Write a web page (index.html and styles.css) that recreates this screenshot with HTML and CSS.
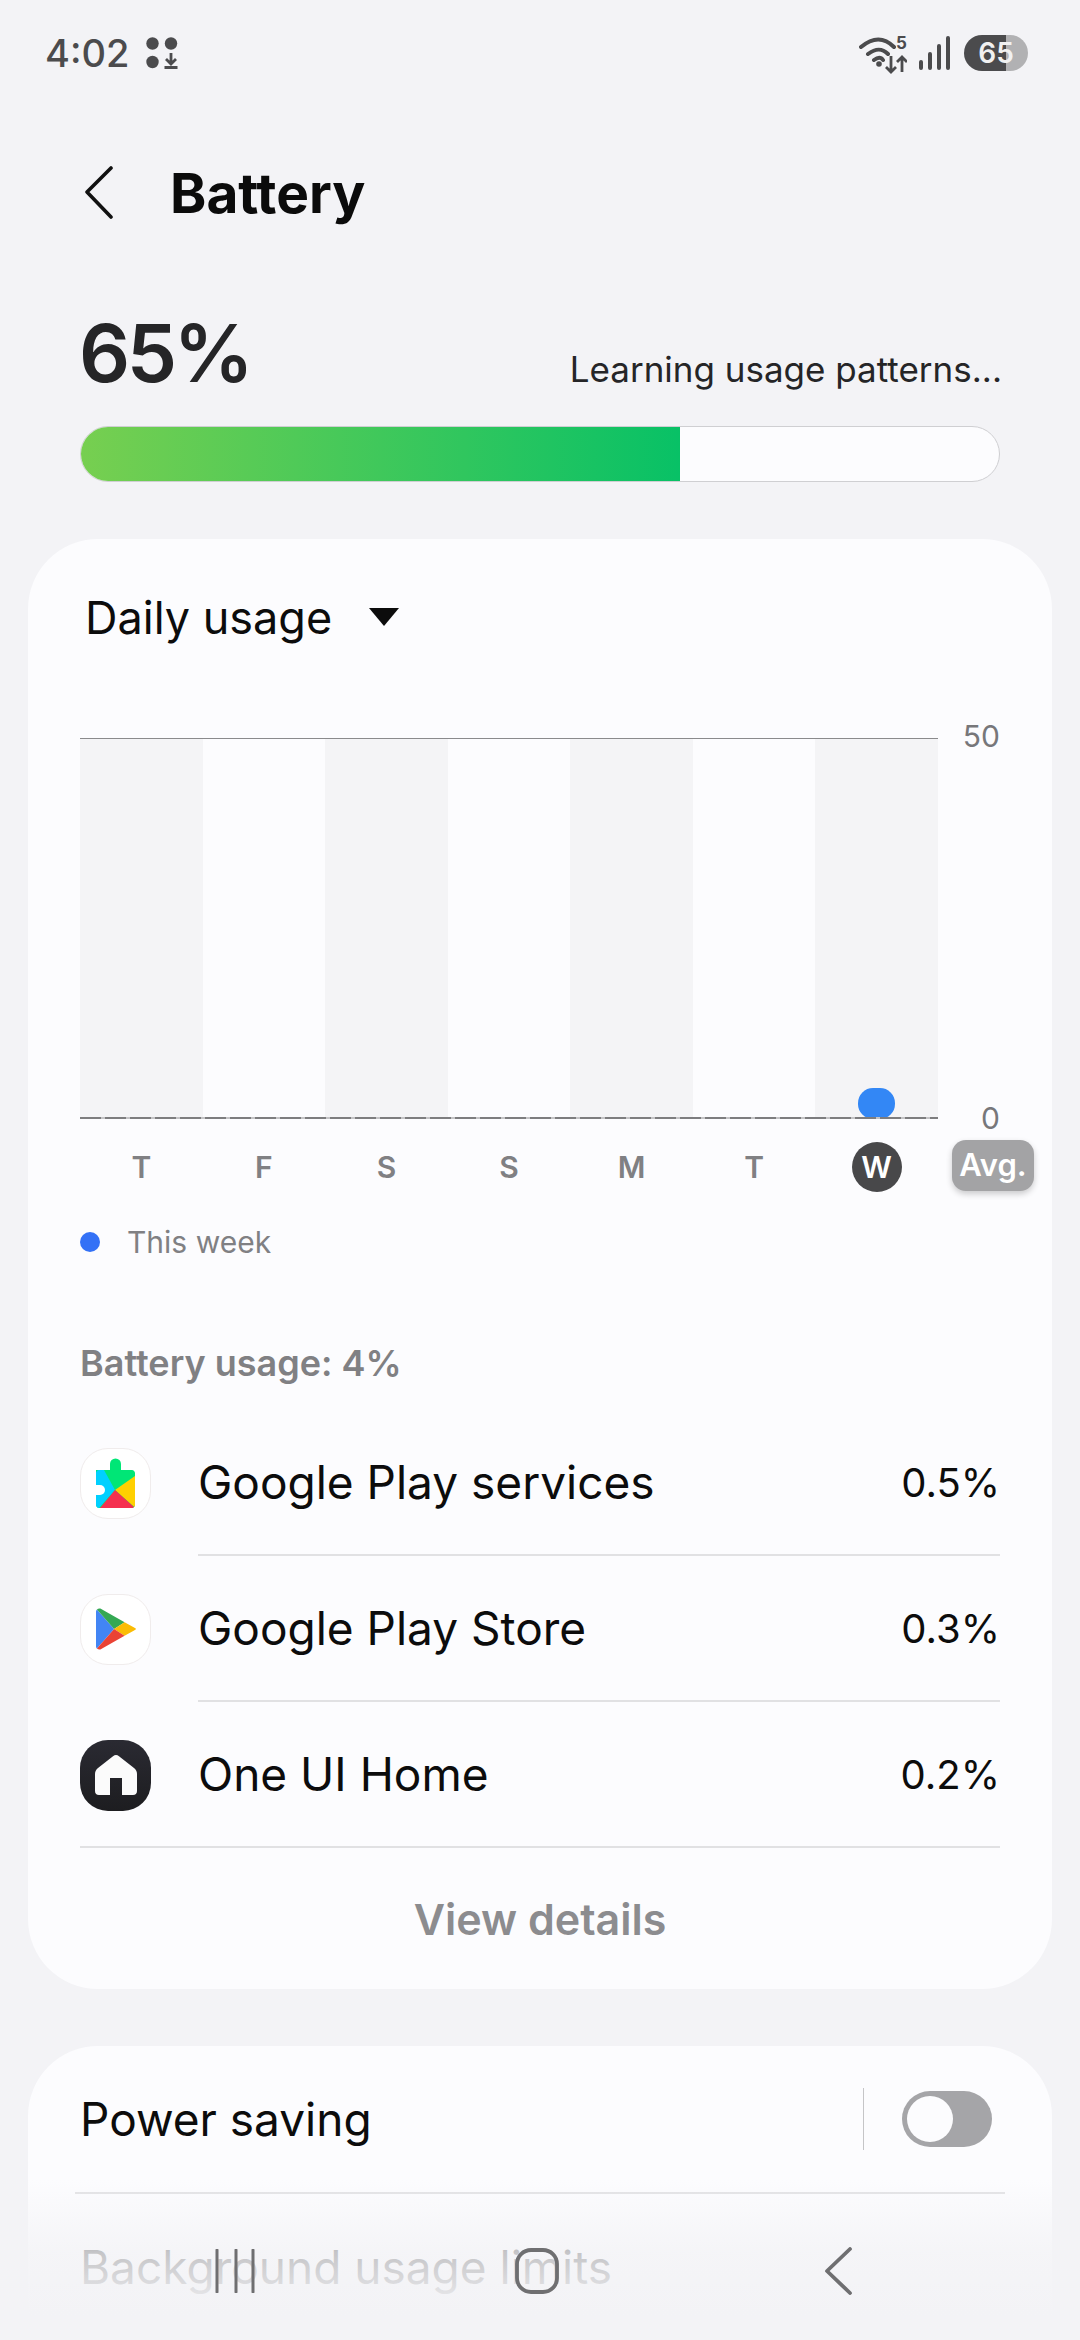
FILE: index.html
```html
<!DOCTYPE html>
<html>

<head>
    <title>Battery</title>
    <link rel="stylesheet" href="styles.css">
</head>

<body>
    <div class="phone">
        <div class="status-bar">
            <div class="status-left">
                <span class="clock">4:02</span>
                <svg class="notif-icon" width="32" height="32" viewBox="0 0 32 32">
                    <circle cx="6.5" cy="6.5" r="6.2" fill="#4b4b4d" />
                    <circle cx="25" cy="6.5" r="6.2" fill="#4b4b4d" />
                    <circle cx="6.5" cy="25" r="6.2" fill="#4b4b4d" />
                    <path d="M25 16v11M20 22l5 5 5-5M18.500 30.500h13" fill="none" stroke="#4b4b4d" stroke-width="2.800" />
                </svg>
            </div>
            <div class="status-right">
                <svg class="wifi" width="48" height="42" viewBox="0 -4 48 42">
                    <path d="M2 11C14 1 25 1 35 11M9 18c8-6 14-6 20 0M15 24c4-3 7-3 9 0" fill="none" stroke="#4b4b4d" stroke-width="4" stroke-linecap="round" />
                    <circle cx="20" cy="28" r="2.800" fill="#4b4b4d" />
                    <path d="M32 20v16M27 31l5 5 5-5M43 36V21M38 26l5-5 5 5" fill="none" stroke="#4b4b4d" stroke-width="2.800" />
                    <text x="37" y="13" class="wifi-five">5</text>
                </svg>
                <svg class="signal" width="32" height="34" viewBox="0 0 32 34">
                    <path d="M3 26v6M12 18v14M21 10v22M30 2v30" fill="none" stroke="#4b4b4d" stroke-width="4" stroke-linecap="round" />
                </svg>
                <div class="battery-pill"><span>65</span></div>
            </div>
        </div>

        <div class="title-bar">
            <svg width="30" height="54" viewBox="0 0 30 54">
                <path d="M27 2 3 26l24 25" fill="none" stroke="#111" stroke-width="3.600" stroke-linecap="round" stroke-linejoin="round" />
            </svg>
            <h1>Battery</h1>
        </div>

        <div class="level-row">
            <span class="level">65%</span>
            <span class="level-note">Learning usage patterns...</span>
        </div>
        <div class="level-bar">
            <div class="level-fill" style="width: 65.200%"></div>
        </div>

        <section class="card usage-card">
            <div class="dropdown">
                <span>Daily usage</span>
                <span class="dropdown-arrow"></span>
            </div>

            <div class="chart">
                <div class="chart-plot">
                    <div class="chart-col shaded"></div>
                    <div class="chart-col"></div>
                    <div class="chart-col shaded"></div>
                    <div class="chart-col"></div>
                    <div class="chart-col shaded"></div>
                    <div class="chart-col"></div>
                    <div class="chart-col shaded"><div class="chart-bar"></div></div>
                </div>
                <span class="axis-label axis-top">50</span>
                <span class="axis-label axis-bottom">0</span>
            </div>

            <div class="days">
                <span class="day">T</span>
                <span class="day">F</span>
                <span class="day">S</span>
                <span class="day">S</span>
                <span class="day">M</span>
                <span class="day">T</span>
                <span class="day"><b class="today">W</b></span>
                <span class="avg-badge">Avg.</span>
            </div>

            <div class="legend">
                <span class="legend-dot"></span>
                <span>This week</span>
            </div>

            <h2 class="usage-total">Battery usage: 4%</h2>

            <div class="app-row">
                <div class="app-icon">
                    <svg width="39" height="50" viewBox="0 0 39 50">
                        <path d="M14 12V6a5.500 5.500 0 1 1 11 0v6h11c1.500 0 3 1.500 3 3v32c0 1.500-1.500 3-3 3H3c-1.500 0-3-1.500-3-3V12z" fill="#00e676" />
                        <path d="M0 15c0-1.500 1.500-3 3-3h5l11 20L3 50c-1.500 0-3-1.500-3-3z" fill="#00d0ff" />
                        <path d="M39 18v29c0 .8-.3 1.500-.8 2L19 32z" fill="#ffd000" />
                        <path d="M19 32 38 49c-.5.7-1.200 1-2 1H4z" fill="#f5304f" />
                        <path d="M0 27h4a5 5 0 0 1 0 10H0z" fill="#fff" />
                    </svg>
                </div>
                <div class="app-info">
                    <span class="app-name">Google Play services</span>
                    <span class="app-pct">0.5%</span>
                </div>
            </div>
            <div class="app-row">
                <div class="app-icon">
                    <svg width="40" height="44" viewBox="0 0 42 46">
                        <path d="M1 2.500 19 23 1 43.500C.4 43 0 42 0 41V5c0-1 .4-2 1-2.500z" fill="#4285f4" />
                        <path d="M1 2.500C2 1.500 4 1 5.500 2L30 16l-11 7z" fill="#34a853" />
                        <path d="M30 16l10 5.500c2.500 1.300 2.500 1.700 0 3L30 30l-11-7z" fill="#fbbc04" />
                        <path d="M19 23l11 7L5.500 44c-1.500 1-3.500.5-4.500-.5z" fill="#ea4335" />
                    </svg>
                </div>
                <div class="app-info">
                    <span class="app-name">Google Play Store</span>
                    <span class="app-pct">0.3%</span>
                </div>
            </div>
            <div class="app-row">
                <div class="app-icon dark">
                    <svg width="42" height="40" viewBox="0 0 42 40">
                        <path d="M21 0c1 0 2 .4 3 1.200L39 13c2 1.500 3 3.500 3 6v17c0 2.500-1.500 4-4 4H27V23H15v17H4c-2.500 0-4-1.500-4-4V19c0-2.500 1-4.500 3-6L18 1.200C19 .4 20 0 21 0z" fill="#fbfbfb" />
                    </svg>
                </div>
                <div class="app-info last">
                    <span class="app-name">One UI Home</span>
                    <span class="app-pct">0.2%</span>
                </div>
            </div>
            <div class="view-details">View details</div>
        </section>

        <section class="card settings-card">
            <div class="setting-row">
                <span>Power saving</span>
                <div class="setting-control">
                    <span class="vline"></span>
                    <span class="toggle"><span class="toggle-knob"></span></span>
                </div>
            </div>
            <div class="setting-divider"></div>
            <div class="setting-row">
                <span>Background usage limits</span>
            </div>
        </section>

        <div class="bottom-fade"></div>
        <div class="nav-bar">
            <svg width="44" height="44" viewBox="0 0 44 44">
                <path d="M3 1v42M22 1v42M39 1v42" fill="none" stroke="#6f6f71" stroke-width="3" stroke-linecap="round" />
            </svg>
            <svg width="44" height="46" viewBox="0 0 44 46">
                <rect x="2" y="2" width="40" height="42" rx="14" fill="none" stroke="#6f6f71" stroke-width="3.800" />
            </svg>
            <svg class="nav-back" width="30" height="48" viewBox="0 0 30 48">
                <path d="M27 2 4 24l23 22" fill="none" stroke="#6f6f71" stroke-width="3.800" stroke-linecap="round" stroke-linejoin="round" />
            </svg>
        </div>
    </div>
</body>

</html>
```

FILE: styles.css
```css
* {
    box-sizing: border-box;
}

body {
    margin: 0;
    padding: 0;
    background-color: #f3f3f6;
    font-family: Inter, "Noto Sans", sans-serif;
}

.phone {
    position: relative;
    width: 1080px;
    height: 2340px;
    overflow: hidden;
    background-color: #f3f3f6;
}

.status-bar {
    display: flex;
    justify-content: space-between;
    align-items: center;
    height: 106px;
    padding: 0 52px 0 45px;
}

.status-left,
.status-right {
    display: flex;
    align-items: center;
}

.clock {
    font-size: 38px;
    font-weight: 500;
    color: #4b4b4d;
}

.notif-icon {
    margin-left: 17px;
}

.wifi-five {
    font-size: 17px;
    font-weight: 700;
    fill: #4b4b4d;
}

.signal {
    margin-left: 11px;
}

.battery-pill {
    width: 64px;
    height: 36px;
    margin-left: 14px;
    border-radius: 18px;
    background: linear-gradient(to right, #4b4b4d 66%, #b1b1b3 66%);
    color: #f1f1f1;
    font-size: 28px;
    font-weight: 600;
    line-height: 36px;
    text-align: center;
}

.title-bar {
    display: flex;
    align-items: center;
    height: 76px;
    margin-top: 49px;
    padding-left: 84px;
}

h1 {
    margin: 0 0 0 56px;
    font-size: 55px;
    font-weight: 700;
    color: #0b0b0b;
}

.level-row {
    display: flex;
    justify-content: space-between;
    align-items: baseline;
    height: 100px;
    margin-top: 73px;
    padding: 0 78px 0 79px;
}

.level {
    font-size: 80px;
    font-weight: 600;
    letter-spacing: -3.500px;
    color: #252527;
}

.level-note {
    font-size: 35px;
    color: #252527;
}

.level-bar {
    height: 56px;
    margin: 22px 80px 0;
    overflow: hidden;
    border: 1px solid #cfcfd2;
    border-radius: 28px;
    background-color: #fcfcfe;
}

.level-fill {
    height: 100%;
    background: linear-gradient(to right, #77cf50, #08c166);
}

.card {
    margin: 0 28px;
    border-radius: 70px;
    background-color: #fcfcfe;
}

.usage-card {
    height: 1450px;
    margin-top: 57px;
    padding: 50px 52px 0;
}

.dropdown {
    display: flex;
    align-items: center;
    height: 56px;
    padding-left: 5px;
    font-size: 45px;
    color: #0c0c0c;
}

.dropdown-arrow {
    width: 0;
    height: 0;
    margin-left: 37px;
    border-top: 18px solid #0c0c0c;
    border-right: 15px solid transparent;
    border-left: 15px solid transparent;
}

.chart {
    position: relative;
    margin-top: 93px;
    height: 381px;
}

.chart-plot {
    position: relative;
    display: grid;
    grid-template-columns: repeat(7, 1fr);
    width: 858px;
    height: 381px;
    border-top: 1px solid #8a8a8c;
}

/* baseline: long dashes with small gaps */
.chart-plot::after {
    content: "";
    position: absolute;
    right: 0;
    bottom: 0;
    left: 0;
    height: 2px;
    background: repeating-linear-gradient(to right, #7d7d7f 0, #7d7d7f 21px, #c4c4c6 21px, #c4c4c6 25px);
}

.chart-col {
    display: flex;
    justify-content: center;
    align-items: flex-end;
}

.chart-col.shaded {
    background-color: #f4f4f6;
}

.chart-bar {
    width: 37px;
    height: 31px;
    border-radius: 15px;
    background-color: #3387f5;
}

.axis-label {
    position: absolute;
    right: 0;
    font-size: 30px;
    color: #77777a;
}

.axis-top {
    top: -20px;
}

.axis-bottom {
    top: 362px;
}

.days {
    position: relative;
    display: grid;
    grid-template-columns: repeat(7, 122.570px);
    align-items: center;
    height: 52px;
    margin-top: 22px;
}

.day {
    display: flex;
    justify-content: center;
    font-size: 30px;
    font-weight: 600;
    color: #808083;
}

.today {
    width: 50px;
    height: 50px;
    border-radius: 50%;
    background-color: #48484a;
    color: #fff;
    font-weight: 600;
    line-height: 50px;
    text-align: center;
}

.avg-badge {
    position: absolute;
    top: -1px;
    left: 872px;
    width: 82px;
    height: 51px;
    border-radius: 14px;
    background-color: #a3a3a5;
    box-shadow: 0 3px 6px rgba(0, 0, 0, 0.2);
    color: #fff;
    font-size: 31px;
    font-weight: 600;
    line-height: 49px;
    text-align: center;
}

.legend {
    display: flex;
    align-items: center;
    height: 40px;
    margin-top: 29px;
    font-size: 30px;
    color: #808083;
}

.legend-dot {
    width: 20px;
    height: 20px;
    margin-right: 27px;
    border-radius: 50%;
    background-color: #3371f6;
}

.usage-total {
    height: 40px;
    margin: 81px 0 0;
    font-size: 36px;
    font-weight: 600;
    line-height: 40px;
    color: #808083;
}

.app-row {
    display: flex;
    align-items: center;
    height: 146px;
}

.usage-total + .app-row {
    margin-top: 27px;
}

.app-icon {
    display: flex;
    flex-shrink: 0;
    justify-content: center;
    align-items: center;
    width: 71px;
    height: 71px;
    border: 1px solid #f0ecec;
    border-radius: 28px;
    background-color: #fff;
}

.app-icon.dark {
    border: none;
    background: linear-gradient(to bottom, #2a2a32, #1d1d20);
}

.app-info {
    display: flex;
    flex: 1;
    justify-content: space-between;
    align-items: center;
    align-self: stretch;
    margin-left: 47px;
    border-bottom: 2px solid #e1e1e3;
    font-size: 46px;
    color: #0c0c0c;
}

.app-info.last {
    position: relative;
}

.app-info.last::after {
    content: "";
    position: absolute;
    right: 0;
    bottom: -2px;
    left: -118px;
    height: 2px;
    background-color: #e1e1e3;
}

.app-pct {
    font-size: 40px;
}

.view-details {
    height: 70px;
    margin-top: 36px;
    font-size: 43px;
    font-weight: 600;
    line-height: 70px;
    text-align: center;
    color: #8c8c8f;
}

.settings-card {
    margin-top: 57px;
    height: 400px;
    padding: 0 47px;
}

.setting-row {
    display: flex;
    justify-content: space-between;
    align-items: center;
    height: 146px;
    padding: 0 13px 0 5px;
    font-size: 46px;
    color: #0c0c0c;
}

.setting-control {
    display: flex;
    align-items: center;
}

.vline {
    width: 1px;
    height: 62px;
    margin-right: 38px;
    background-color: #c5c5c7;
}

.toggle {
    display: flex;
    align-items: center;
    width: 90px;
    height: 56px;
    padding-left: 5px;
    border-radius: 28px;
    background-color: #a5a5a8;
}

.toggle-knob {
    width: 46px;
    height: 46px;
    border-radius: 50%;
    background-color: #fcfcfe;
}

.setting-divider {
    height: 2px;
    background-color: #e1e1e3;
}

.bottom-fade {
    position: absolute;
    right: 0;
    bottom: 0;
    left: 0;
    height: 160px;
    background: linear-gradient(to bottom, rgba(243, 243, 246, 0), rgba(243, 243, 246, 0.8) 45%, #f3f3f6 85%);
}

.nav-bar {
    position: absolute;
    right: 0;
    bottom: 44px;
    left: 0;
    display: flex;
    align-items: center;
    gap: 257px;
    height: 50px;
    padding-left: 214px;
}

.nav-back {
    margin-left: 7px;
}
```
